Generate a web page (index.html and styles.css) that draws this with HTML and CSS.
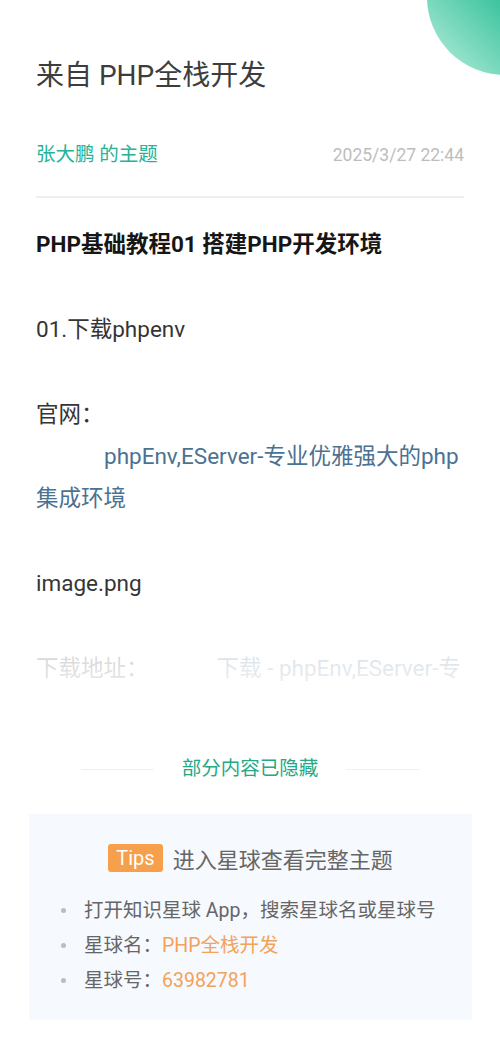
FILE: index.html
```html
<!DOCTYPE html>
<html lang="zh-CN">
<head>
<meta charset="utf-8">
<title>来自 PHP全栈开发</title>
<link rel="stylesheet" href="styles.css">
</head>
<body>
<div class="page">
  <div class="blob"></div>
  <header class="header">
    <h1 class="group">来自 PHP全栈开发</h1>
    <div class="meta">
      <span class="author">张大鹏 的主题</span>
      <span class="date">2025/3/27 22:44</span>
    </div>
    <div class="divider"></div>
  </header>

  <div class="article">
    <p class="topic-title">PHP基础教程01 搭建PHP开发环境</p>
    <p>01.下载phpenv</p>
    <p>官网：<br><span class="spacer"></span><a class="link">phpEnv,EServer-专业优雅强大的php集成环境</a></p>
    <p>image.png</p>
    <p class="last">下载地址：<span class="spacer"></span><a class="link">下载 - phpEnv,EServer-专</a></p>
  </div>

  <div class="hidden-note">
    <span class="rule"></span>
    <span class="hidden-text">部分内容已隐藏</span>
    <span class="rule"></span>
  </div>

  <section class="tips">
    <div class="tips-head">
      <span class="badge">Tips</span>
      <span class="tips-title">进入星球查看完整主题</span>
    </div>
    <ul class="tips-list">
      <li>打开知识星球 App，搜索星球名或星球号</li>
      <li>星球名：<span class="hl">PHP全栈开发</span></li>
      <li>星球号：<span class="hl">63982781</span></li>
    </ul>
  </section>
</div>
</body>
</html>
```

FILE: styles.css
```css
html, body {
  margin: 0;
  padding: 0;
  background: #ffffff;
}

body {
  font-family: Roboto, "Noto Sans CJK SC", "Noto Sans", sans-serif;
  color: #333333;
}

.page {
  position: relative;
  overflow: hidden;
  width: 500px;
  height: 1058px;
}

.blob {
  position: absolute;
  left: 427px;
  top: -81px;
  width: 156px;
  height: 156px;
  border-radius: 50%;
  background: linear-gradient(225deg, #12ae87 0%, #36c19b 50%, #a6e8d3 92%);
}

.header {
  padding: 56px 36px 0;
}

.group {
  margin: 0;
  font-size: 28px;
  line-height: 40px;
  font-weight: 400;
  color: #3d3d3d;
}

.meta {
  margin-top: 45px;
  display: flex;
  justify-content: space-between;
  align-items: baseline;
  line-height: 28px;
}

.author {
  font-size: 19.5px;
  color: #26b398;
}

.date {
  font-size: 17.5px;
  color: #bdbdbd;
}

.divider {
  margin-top: 27px;
  height: 2px;
  background: #eeeeee;
}

.article {
  position: relative;
  margin: 25px 36px 0;
  font-size: 22.5px;
  line-height: 42px;
  color: #353535;
}

.article::after {
  content: "";
  position: absolute;
  left: 0;
  right: 0;
  bottom: 0;
  height: 85px;
  background: linear-gradient(to bottom, rgba(255,255,255,0) 0%, rgba(255,255,255,0.8) 60%, rgba(255,255,255,0.9) 100%);
}

.article p {
  margin: 0 0 43px;
}

.article p.last {
  margin-bottom: 0;
  white-space: nowrap;
}

.article .topic-title {
  font-weight: 700;
  color: #161616;
}

.spacer {
  display: inline-block;
  width: 68px;
}

.link {
  color: #4b7291;
  text-decoration: none;
}

.hidden-note {
  margin-top: 66px;
  display: flex;
  justify-content: center;
  align-items: center;
  line-height: 28px;
}

.rule {
  width: 73px;
  height: 1px;
  background: #f0f0f0;
}

.hidden-text {
  margin: 0 28px;
  font-size: 19.5px;
  color: #24a886;
}

.tips {
  margin: 31px 28px 0 29px;
  padding: 30px 0 22px;
  background: #f6f9fd;
}

.tips-head {
  display: flex;
  justify-content: center;
  align-items: center;
  height: 28px;
}

.badge {
  height: 28px;
  line-height: 28px;
  padding: 0 8px;
  border-radius: 3px;
  background: #f7a04b;
  color: #ffffff;
  font-size: 20px;
}

.tips-title {
  margin-left: 10px;
  font-size: 22px;
  color: #666666;
}

.tips-list {
  list-style: none;
  margin: 21px 0 0;
  padding: 0 0 0 32px;
}

.tips-list li {
  display: flex;
  align-items: center;
  font-size: 19.5px;
  line-height: 35px;
  color: #666666;
}

.tips-list li::before {
  content: "";
  width: 5px;
  height: 5px;
  border-radius: 50%;
  background: #bdbdbd;
  margin-right: 18px;
  flex: none;
}

.hl {
  color: #f2a35a;
}
```
